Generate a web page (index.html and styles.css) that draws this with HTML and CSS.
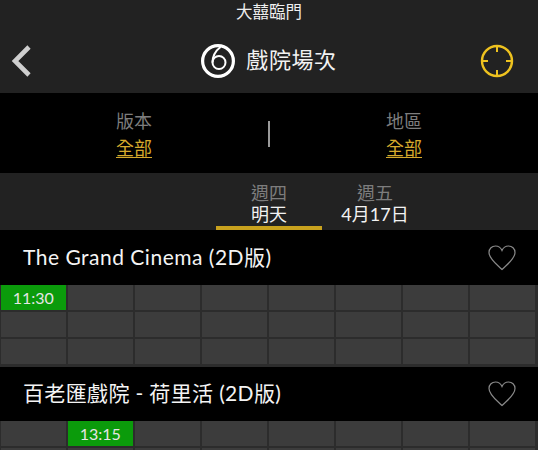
FILE: index.html
```html
<!DOCTYPE html>
<html lang="zh-Hant">
<head>
    <meta charset="UTF-8">
    <meta name="viewport" content="width=device-width, initial-scale=1.0">
    <title>戲院場次</title>
    <link rel="stylesheet" href="styles.css">
</head>
<body>
    <div class="header">
        <div class="status">大囍臨門</div>
        <div class="nav">
            <svg class="back" width="24" height="36" viewBox="0 0 24 36">
                <path d="M19 4 L5 18 L19 32" fill="none" stroke="#cfcfcf" stroke-width="4.6"/>
            </svg>
            <div class="page-title">
                <svg width="34" height="34" viewBox="0 0 34 34">
                    <circle cx="17" cy="17" r="15.400" fill="none" stroke="#fff" stroke-width="3.200"/>
                    <circle cx="18" cy="18.500" r="6.500" fill="none" stroke="#fff" stroke-width="2"/>
                    <path d="M11.500 18.500 C11.500 12 15 6.500 19.500 3" fill="none" stroke="#fff" stroke-width="2"/>
                </svg>
                <span class="page-title-text">戲院場次</span>
            </div>
            <svg class="locate" width="34" height="34" viewBox="0 0 34 34">
                <circle cx="17" cy="17" r="15" fill="none" stroke="#eec21f" stroke-width="2.400"/>
                <path d="M17 2 V8 M17 26 V32 M2 17 H8 M26 17 H32" stroke="#eec21f" stroke-width="2"/>
            </svg>
        </div>
    </div>

    <div class="filters">
        <div class="filter">
            <div class="filter-label">版本</div>
            <a class="filter-value">全部</a>
        </div>
        <div class="divider"></div>
        <div class="filter">
            <div class="filter-label">地區</div>
            <a class="filter-value">全部</a>
        </div>
    </div>

    <div class="tabs">
        <div class="tab active">
            <div class="tab-day">週四</div>
            <div class="tab-date">明天</div>
        </div>
        <div class="tab">
            <div class="tab-day">週五</div>
            <div class="tab-date">4月17日</div>
        </div>
    </div>

    <div class="cinema-row">
        <div class="cinema-name">The Grand Cinema (2D版)</div>
        <svg class="heart" width="28" height="26" viewBox="0 0 28 26">
            <path d="M14 24.500 C9 19.500 1 14 1 7.500 C1 3.500 4 1 7.500 1 C10.500 1 12.800 2.800 14 5.500 C15.200 2.800 17.500 1 20.500 1 C24 1 27 3.500 27 7.500 C27 14 19 19.500 14 24.500 Z" fill="none" stroke="#8a8a8a" stroke-width="1.200"/>
        </svg>
    </div>
    <div class="times">
        <div class="slot open">11:30</div>
        <div class="slot"></div><div class="slot"></div><div class="slot"></div><div class="slot"></div><div class="slot"></div><div class="slot"></div><div class="slot"></div>
        <div class="slot"></div><div class="slot"></div><div class="slot"></div><div class="slot"></div><div class="slot"></div><div class="slot"></div><div class="slot"></div><div class="slot"></div>
        <div class="slot"></div><div class="slot"></div><div class="slot"></div><div class="slot"></div><div class="slot"></div><div class="slot"></div><div class="slot"></div><div class="slot"></div>
    </div>

    <div class="cinema-row second">
        <div class="cinema-name">百老匯戲院 - 荷里活 (2D版)</div>
        <svg class="heart" width="28" height="26" viewBox="0 0 28 26">
            <path d="M14 24.500 C9 19.500 1 14 1 7.500 C1 3.500 4 1 7.500 1 C10.500 1 12.800 2.800 14 5.500 C15.200 2.800 17.500 1 20.500 1 C24 1 27 3.500 27 7.500 C27 14 19 19.500 14 24.500 Z" fill="none" stroke="#8a8a8a" stroke-width="1.200"/>
        </svg>
    </div>
    <div class="times cut-off">
        <div class="slot"></div>
        <div class="slot open">13:15</div>
        <div class="slot"></div><div class="slot"></div><div class="slot"></div><div class="slot"></div><div class="slot"></div><div class="slot"></div>
        <div class="slot"></div><div class="slot"></div><div class="slot"></div><div class="slot"></div><div class="slot"></div><div class="slot"></div><div class="slot"></div><div class="slot"></div>
    </div>
</body>
</html>
```

FILE: styles.css
```css
html {
    height: 100%;
    overflow: hidden;
}
body {
    font-family: Lato, 'Noto Sans CJK TC', sans-serif;
    background-color: #000;
    color: #fff;
    margin: 0;
    padding: 0;
    height: 450px;
    overflow: hidden;
}
.header {
    height: 93px;
    background: #222;
}
.status {
    height: 24px;
    line-height: 24px;
    font-size: 16.500px;
    text-align: center;
    color: #eee;
}
.nav {
    height: 69px;
    box-sizing: border-box;
    padding: 5px 10px 0;
    display: grid;
    grid-template-columns: 1fr auto 1fr;
    align-items: center;
}
.locate {
    justify-self: end;
    margin-right: 14px;
}
.page-title {
    display: flex;
    align-items: center;
    gap: 11px;
    font-size: 22px;
    letter-spacing: 0.600px;
    color: #f2f2f2;
}
.page-title-text {
    line-height: 30px;
    padding-bottom: 3px;
}
.filters {
    height: 80px;
    box-sizing: border-box;
    padding-top: 4px;
    display: flex;
    align-items: center;
}
.filter {
    flex: 1;
    text-align: center;
    font-size: 18px;
    line-height: 27px;
}
.filter-label {
    color: #7d7d7d;
}
.filter-value {
    color: #d6a92c;
    text-decoration: underline;
    text-underline-offset: 2px;
}
.divider {
    width: 2px;
    height: 26px;
    background: #9a9a9a;
    margin-bottom: 2px;
}
.tabs {
    height: 57px;
    box-sizing: border-box;
    background: #222;
    padding-left: 216px;
    display: flex;
}
.tab {
    width: 106px;
    box-sizing: border-box;
    padding-top: 10px;
    text-align: center;
    font-size: 18px;
    line-height: 21px;
}
.tab.active {
    border-bottom: 4px solid #c9a21e;
}
.tab-day {
    color: #7d7d7d;
}
.tab-date {
    color: #f2f2f2;
}
.cinema-row {
    height: 55px;
    box-sizing: border-box;
    padding: 0 22px 0 23px;
    display: flex;
    align-items: center;
    justify-content: space-between;
}
.cinema-row.second {
    height: 54px;
}
.cinema-name {
    font-size: 21px;
    line-height: 28px;
    padding-bottom: 2px;
    letter-spacing: 0.500px;
    color: #f4f4f4;
}
.second .cinema-name {
    letter-spacing: 0.350px;
}
.times {
    background: #2c2c2c;
    padding: 0 4px 3px 1px;
    display: grid;
    grid-template-columns: repeat(8, 64.500px);
    grid-auto-rows: 25px;
    column-gap: 2.500px;
    row-gap: 2px;
}
/* last row only shows its top edge at the bottom of the window */
.times.cut-off {
    padding-bottom: 0;
    grid-template-rows: 25px 2px;
}
.slot {
    background: #3c3c3c;
    text-align: center;
    font-size: 16px;
    line-height: 26px;
    color: #e6e6e6;
}
.slot.open {
    background: #0b9b0b;
}
```
